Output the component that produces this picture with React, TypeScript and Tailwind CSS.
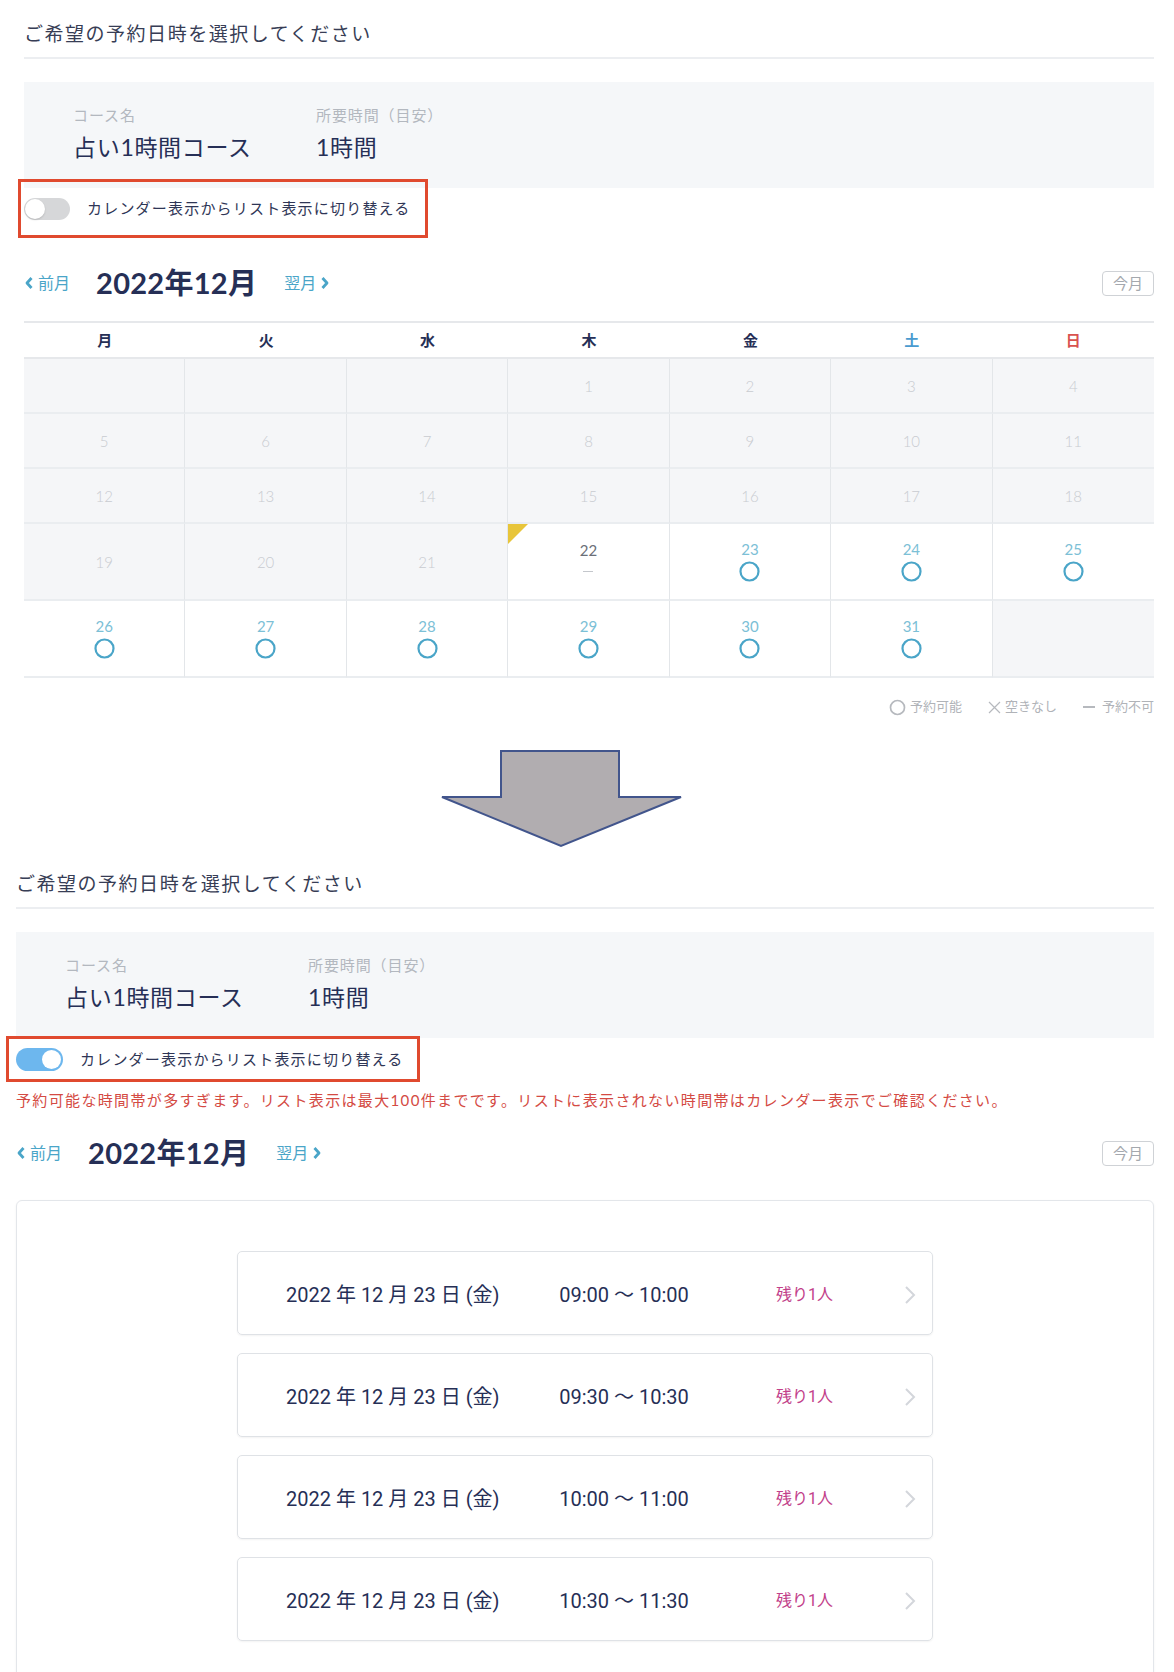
import React from "react";

const FONT = 'Lato, "Noto Sans CJK JP", sans-serif';
const LIST_FONT = 'Roboto, "Noto Sans CJK JP", sans-serif';

function ChevL({ cls }: { cls: string }) {
  return (
    <svg width="10" height="14" viewBox="0 0 10 14" className={cls}>
      <polyline points="7.5,2 3,7 7.5,12" fill="none" stroke="currentColor" strokeWidth="2.8" strokeLinejoin="round" />
    </svg>
  );
}
function ChevR({ cls }: { cls: string }) {
  return (
    <svg width="10" height="14" viewBox="0 0 10 14" className={cls}>
      <polyline points="2.5,2 7,7 2.5,12" fill="none" stroke="currentColor" strokeWidth="2.8" strokeLinejoin="round" />
    </svg>
  );
}

function Toggle({ on }: { on: boolean }) {
  if (on) {
    return (
      <div className="w-[47px] h-[23px] rounded-full bg-[#6db7ee] flex items-center justify-end p-[2px] shrink-0">
        <div className="w-[19px] h-[19px] rounded-full bg-white" />
      </div>
    );
  }
  return (
    <div className="w-[46px] h-[22px] rounded-full bg-[#d6d7d9] flex items-center justify-start p-[1px] shrink-0">
      <div className="w-[20px] h-[20px] rounded-full bg-white shadow-[0_1px_2px_rgba(0,0,0,0.15)]" />
    </div>
  );
}

function Header() {
  return (
    <>
      <div className="h-[28px] flex items-center text-[19px] tracking-[0.08em] text-[#373d55]">
        ご希望の予約日時を選択してください
      </div>
      <div className="mt-[9px] h-[2px] bg-[#eceef1]" />
      <div className="mt-[23px] h-[106px] bg-[#f5f7f9] pt-[23px] pl-[49px]">
        <div className="flex">
          <div className="w-[243px]">
            <div className="text-[15px] leading-[20px] tracking-[0.06em] text-[#b3b8bf]">コース名</div>
            <div className="mt-[6px] text-[23px] leading-[32px] tracking-[0.03em] text-[#262f56]">占い1時間コース</div>
          </div>
          <div>
            <div className="text-[15px] leading-[20px] tracking-[0.06em] text-[#b3b8bf]">所要時間（目安）</div>
            <div className="mt-[6px] text-[23px] leading-[32px] tracking-[0.03em] text-[#262f56]">1時間</div>
          </div>
        </div>
      </div>
    </>
  );
}

function NavRow() {
  return (
    <div className="flex items-center justify-between h-[40px]">
      <div className="flex items-center">
        <div className="flex items-center gap-[4px] text-[16px] text-[#4aa5c8]">
          <ChevL cls="text-[#4aa5c8]" />
          <span>前月</span>
        </div>
        <div className="ml-[26px] text-[29px] leading-[40px] text-[#262f56] font-bold tracking-[0.01em]">2022年12月</div>
        <div className="ml-[27px] flex items-center gap-[4px] text-[16px] text-[#4aa5c8]">
          <span>翌月</span>
          <ChevR cls="text-[#4aa5c8]" />
        </div>
      </div>
      <div className="h-[25px] w-[52px] border-[1.5px] border-[#cfd2d6] rounded-[4px] flex items-center justify-center text-[15px] text-[#a4a8ae]">
        今月
      </div>
    </div>
  );
}

type Cell = { d: number | null; kind: "past" | "today" | "avail" | "empty" };

const rows: { h: string; cells: Cell[] }[] = [
  {
    h: "h-[55px]",
    cells: [
      { d: null, kind: "empty" },
      { d: null, kind: "empty" },
      { d: null, kind: "empty" },
      { d: 1, kind: "past" },
      { d: 2, kind: "past" },
      { d: 3, kind: "past" },
      { d: 4, kind: "past" },
    ],
  },
  { h: "h-[55px]", cells: [5, 6, 7, 8, 9, 10, 11].map((d) => ({ d, kind: "past" as const })) },
  { h: "h-[55px]", cells: [12, 13, 14, 15, 16, 17, 18].map((d) => ({ d, kind: "past" as const })) },
  {
    h: "h-[77px]",
    cells: [
      { d: 19, kind: "past" },
      { d: 20, kind: "past" },
      { d: 21, kind: "past" },
      { d: 22, kind: "today" },
      { d: 23, kind: "avail" },
      { d: 24, kind: "avail" },
      { d: 25, kind: "avail" },
    ],
  },
  {
    h: "h-[77px]",
    cells: [
      { d: 26, kind: "avail" },
      { d: 27, kind: "avail" },
      { d: 28, kind: "avail" },
      { d: 29, kind: "avail" },
      { d: 30, kind: "avail" },
      { d: 31, kind: "avail" },
      { d: null, kind: "empty" },
    ],
  },
];

function Circle() {
  return (
    <svg width="21" height="21" viewBox="0 0 21 21">
      <circle cx="10.5" cy="10.5" r="9" fill="none" stroke="#4aa5c8" strokeWidth="2.2" />
    </svg>
  );
}

function Calendar() {
  const days = ["月", "火", "水", "木", "金", "土", "日"];
  const dayColor = (i: number) =>
    i === 5 ? "text-[#4a9bcf]" : i === 6 ? "text-[#d9534f]" : "text-[#262f56]";
  return (
    <div>
      <div className="grid grid-cols-7 h-[38px] border-t-2 border-b-2 border-[#e6e8eb]">
        {days.map((d, i) => (
          <div key={d} className={`flex items-center justify-center text-[15px] font-bold ${dayColor(i)}`}>
            {d}
          </div>
        ))}
      </div>
      {rows.map((r, ri) => (
        <div key={ri} className="grid grid-cols-7">
          {r.cells.map((c, ci) => {
            const br = ci < 6 ? "border-r border-r-[#e3e6e9]" : "";
            const bg = c.kind === "past" || c.kind === "empty" ? "bg-[#f5f6f8]" : "bg-white";
            return (
              <div
                key={ci}
                className={`${r.h} ${br} ${bg} border-b-2 border-b-[#eaedf0] relative flex flex-col items-center justify-center`}
              >
                {c.kind === "past" && (
                  <span className="text-[15px] leading-[16px] font-light text-[#c8cbd0]">{c.d}</span>
                )}
                {c.kind === "today" && (
                  <>
                    <div className="absolute left-0 top-0 w-0 h-0 border-t-[20px] border-t-[#e8c53a] border-r-[20px] border-r-transparent" />
                    <span className="text-[15px] leading-[16px] text-[#6b6f78]">{c.d}</span>
                    <span className="mt-[4px] h-[20px] flex items-center">
                      <span className="block w-[10px] h-[1px] bg-[#c4c7cc]" />
                    </span>
                  </>
                )}
                {c.kind === "avail" && (
                  <>
                    <span className="text-[15px] leading-[16px] text-[#7cc0d6]">{c.d}</span>
                    <span className="mt-[4px] flex">
                      <Circle />
                    </span>
                  </>
                )}
              </div>
            );
          })}
        </div>
      ))}
      <div className="mt-[20px] h-[18px] flex items-center justify-end text-[13px] text-[#b0b3b8]">
        <span className="flex items-center gap-[4px]">
          <svg width="17" height="17" viewBox="0 0 17 17">
            <circle cx="8.5" cy="8.5" r="7" fill="none" stroke="#b6b9be" strokeWidth="1.7" />
          </svg>
          予約可能
        </span>
        <span className="ml-[25px] flex items-center gap-[3px]">
          <svg width="15" height="15" viewBox="0 0 15 15">
            <path d="M2 2 L13 13 M13 2 L2 13" stroke="#b6b9be" strokeWidth="1.2" />
          </svg>
          空きなし
        </span>
        <span className="ml-[26px] flex items-center gap-[7px]">
          <span className="block w-[12px] h-[1.5px] bg-[#b6b9be]" />
          予約不可
        </span>
      </div>
    </div>
  );
}

function Arrow() {
  return (
    <div className="mt-[33px] ml-[440px]">
      <svg width="244" height="100" viewBox="0 0 244 100">
        <polygon
          points="61,2 179,2 179,48 241,48 121,97 2,48 61,48"
          fill="#b1adb0"
          stroke="#42558c"
          strokeWidth="2"
          strokeLinejoin="miter"
        />
      </svg>
    </div>
  );
}

const slots = [
  ["09:00", "10:00"],
  ["09:30", "10:30"],
  ["10:00", "11:00"],
  ["10:30", "11:30"],
];

function ListView() {
  return (
    <div className="mt-[27px] border border-[#e3e6ea] rounded-[6px] shadow-[0_1px_3px_rgba(0,0,0,0.05)] pt-[50px] pb-[60px] flex flex-col items-center gap-[18px]">
      {slots.map(([a, b]) => (
        <div
          key={a}
          className="w-[696px] h-[84px] border-[1.5px] border-[#dfe2e6] rounded-[5px] shadow-[0_1px_2px_rgba(0,0,0,0.05)] flex items-center pl-[48px] pr-[16px]"
          style={{ fontFamily: LIST_FONT }}
        >
          <div className="w-[225px] pt-[4px] text-[20px] text-[#262f56]">2022 年 12 月 23 日 (金)</div>
          <div className="w-[226px] pt-[4px] text-center text-[20px] text-[#262f56]">
            {a} 〜 {b}
          </div>
          <div className="ml-[39px] pt-[4px] text-[16px] text-[#c2418a]">残り1人</div>
          <div className="flex-1 flex justify-end pt-[4px]">
            <svg width="12" height="20" viewBox="0 0 12 20">
              <polyline points="2,2 10,10 2,18" fill="none" stroke="#d3d6db" strokeWidth="2" />
            </svg>
          </div>
        </div>
      ))}
    </div>
  );
}

export default function App() {
  return (
    <div className="w-[1174px] bg-white overflow-hidden" style={{ fontFamily: FONT }}>
      {/* Section 1: calendar view */}
      <div className="pl-[24px] pr-[20px] pt-[20px]">
        <Header />
        <div className="-mt-[9px] -ml-[6px] w-[410px] h-[59px] border-[3px] border-[#e04a2f] flex items-center pl-[3px]">
          <Toggle on={false} />
          <span className="ml-[17px] text-[15px] tracking-[0.08em] text-[#2f3656]">
            カレンダー表示からリスト表示に切り替える
          </span>
        </div>
        <div className="mt-[25px]">
          <NavRow />
        </div>
        <div className="mt-[18px]">
          <Calendar />
        </div>
      </div>

      <Arrow />

      {/* Section 2: list view */}
      <div className="pl-[16px] pr-[20px] mt-[21px]">
        <Header />
        <div className="-mt-[2px] -ml-[10px] w-[414px] h-[46px] border-[3px] border-[#e04a2f] flex items-center pl-[7px]">
          <Toggle on={true} />
          <span className="ml-[17px] text-[15px] tracking-[0.08em] text-[#2f3656]">
            カレンダー表示からリスト表示に切り替える
          </span>
        </div>
        <div className="mt-[8px] h-[20px] flex items-center text-[15px] tracking-[0.09em] text-[#d44a43]">
          予約可能な時間帯が多すぎます。リスト表示は最大100件までです。リストに表示されない時間帯はカレンダー表示でご確認ください。
        </div>
        <div className="mt-[23px]">
          <NavRow />
        </div>
        <ListView />
      </div>
    </div>
  );
}
